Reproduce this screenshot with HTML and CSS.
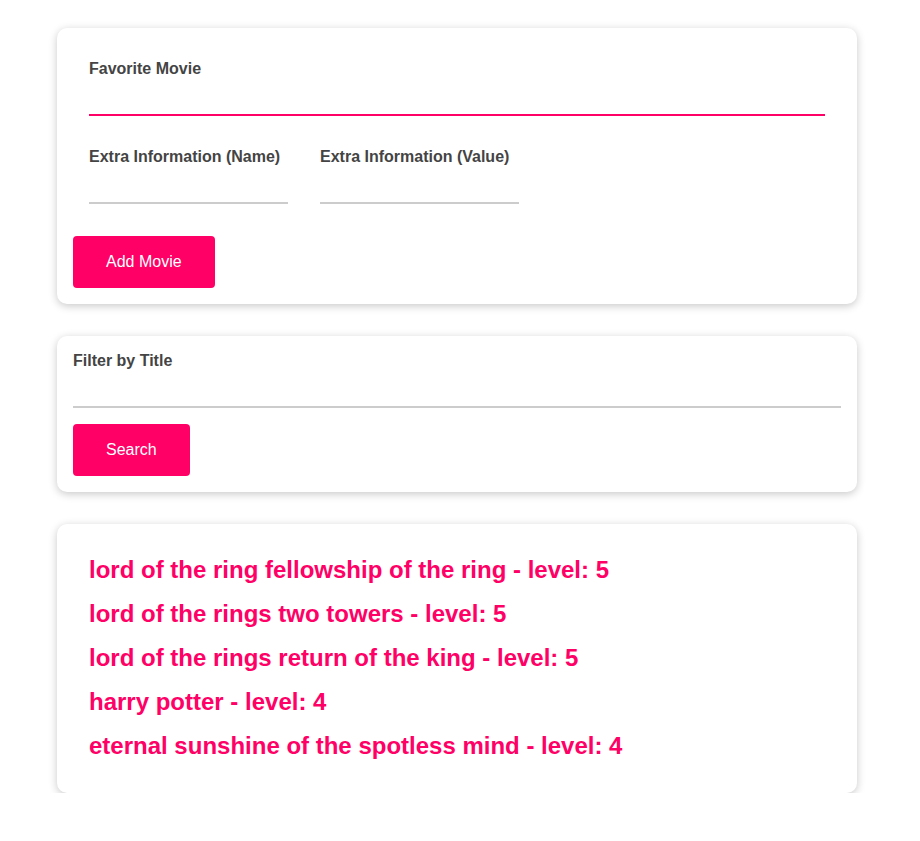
FILE: index.html
```html
<!DOCTYPE html>
<html>
<head>
<meta charset="utf-8">
<link rel="stylesheet" href="styles.css">
</head>
<body>
<div class="page">
  <form class="card">
    <div class="field field-full">
      <label class="label">Favorite Movie</label>
      <input class="input input-active" type="text">
    </div>
    <div class="row">
      <div class="field">
        <label class="label">Extra Information (Name)</label>
        <input class="input input-small" type="text">
      </div>
      <div class="field">
        <label class="label">Extra Information (Value)</label>
        <input class="input input-small" type="text">
      </div>
    </div>
    <button class="btn btn-add" type="button">Add Movie</button>
  </form>

  <form class="card">
    <label class="label">Filter by Title</label>
    <input class="input" type="text">
    <button class="btn btn-search" type="button">Search</button>
  </form>

  <div class="card card-list">
    <ul class="movies">
      <li>lord of the ring fellowship of the ring - level: 5</li>
      <li>lord of the rings two towers - level: 5</li>
      <li>lord of the rings return of the king - level: 5</li>
      <li>harry potter - level: 4</li>
      <li>eternal sunshine of the spotless mind - level: 4</li>
    </ul>
  </div>
</div>
</body>
</html>
```
FILE: styles.css
```css
* { box-sizing: border-box; }
html, body { margin: 0; padding: 0; background: #fff; }
body { font-family: "Liberation Sans", Arial, sans-serif; }
.page {
  width: 800px;
  margin-left: 57px;
  padding-top: 28px;
  display: flex;
  flex-direction: column;
  gap: 32px;
}
.card {
  background: #fff;
  border-radius: 10px;
  box-shadow: 0 2px 8px rgba(0,0,0,0.22);
  padding: 16px;
  display: flex;
  flex-direction: column;
  margin: 0;
}
.field { padding: 16px; display: flex; flex-direction: column; }
.row { display: flex; }
.label {
  display: block;
  font-size: 16px;
  line-height: 17px;
  font-weight: bold;
  color: #444;
}
.input {
  display: block;
  width: 100%;
  height: 39px;
  border: none;
  border-bottom: 2px solid #ccc;
  outline: none;
  background: transparent;
  font: inherit;
  padding: 0;
}
.input-active { border-bottom-color: #ff0066; }
.input-small { width: 199px; }
.btn {
  align-self: flex-start;
  height: 52px;
  padding: 0 33px;
  background: #ff0066;
  color: #fff;
  border: none;
  border-radius: 4px;
  font-family: "Liberation Sans", Arial, sans-serif;
  font-size: 16px;
}
.btn-add { margin-top: 16px; }
.btn-search { margin-top: 16px; }
.card-list { padding: 24px 32px 25px; }
.movies {
  list-style: none;
  margin: 0;
  padding: 0;
}
.movies li {
  color: #ff0066;
  font-size: 24px;
  font-weight: bold;
  line-height: 44px;
}
```
